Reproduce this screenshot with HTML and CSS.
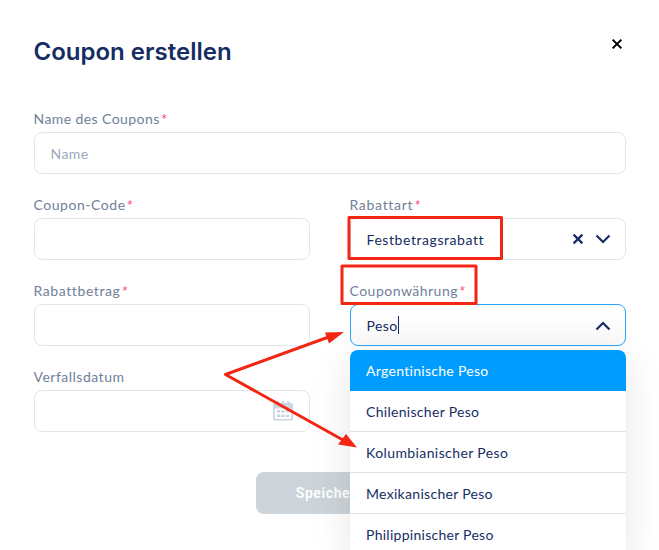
FILE: index.html
```html
<!DOCTYPE html>
<html lang="de">
<head>
<meta charset="utf-8">
<title>Coupon erstellen</title>
<link rel="stylesheet" href="styles.css">
</head>
<body>
<main class="dialog">
  <header class="header">
    <h1 class="title">Coupon erstellen</h1>
    <svg class="close" viewBox="0 0 12 12"><path d="M1.6 1.6 10.4 10.4M10.4 1.6 1.6 10.4"/></svg>
  </header>
  <form class="form">
    <div class="field wide">
      <label class="label"><span class="l-name">Name des Coupons</span><i>*</i></label>
      <div class="input"><span class="placeholder">Name</span></div>
    </div>
    <div class="field">
      <label class="label"><span class="l-code">Coupon-Code</span><i>*</i></label>
      <div class="input"></div>
    </div>
    <div class="field">
      <label class="label"><span class="l-type">Rabattart</span><i>*</i></label>
      <div class="input"><span class="value">Festbetragsrabatt</span>
        <svg class="clear" viewBox="0 0 12 12"><path d="M1.6 1.6 10.4 10.4M10.4 1.6 1.6 10.4"/></svg>
        <svg class="chevron" viewBox="0 0 16 10"><path d="M1.5 1.5 8 8 14.5 1.5"/></svg>
      </div>
    </div>
    <div class="field">
      <label class="label"><span class="l-amount">Rabattbetrag</span><i>*</i></label>
      <div class="input"></div>
    </div>
    <div class="field select">
      <label class="label"><span class="l-currency">Couponwährung</span><i>*</i></label>
      <div class="input focus"><span class="typed">Peso</span><span class="caret"></span>
        <svg class="chevron" viewBox="0 0 16 10"><path d="M1.5 8.5 8 2 14.5 8.5"/></svg>
      </div>
      <div class="menu">
        <div class="option active"><span class="o-ar">Argentinische Peso</span></div>
        <div class="option"><span class="o-cl">Chilenischer Peso</span></div>
        <div class="option"><span class="o-co">Kolumbianischer Peso</span></div>
        <div class="option"><span class="o-mx">Mexikanischer Peso</span></div>
        <div class="option"><span class="o-ph">Philippinischer Peso</span></div>
      </div>
    </div>
    <div class="field">
      <label class="label"><span class="l-date">Verfallsdatum</span></label>
      <div class="input">
        <svg class="calendar" viewBox="0 0 20 20"><path fill-rule="evenodd" d="M2 2H3.600V1Q3.600 0 4.800 0T6 1V2H8.800V1Q8.800 0 10 0T11.200 1V2H14V1Q14 0 15.200 0T16.400 1V2H18Q20 2 20 4V17.500Q20 19.500 18 19.500H2Q0 19.500 0 17.500V4Q0 2 2 2ZM1.700 7.500V17Q1.700 18 2.700 18H17.300Q18.300 18 18.300 17V7.500Z"/><path d="M3.800 9h3.400v2.500H3.800zM8.300 9h3.400v2.500H8.300zM12.800 9h3.400v2.500h-3.400zM3.800 13.500h3.400v2.500H3.800zM8.300 13.500h3.400v2.500H8.300zM12.800 13.500h3.400v2.500h-3.400z"/></svg>
      </div>
    </div>
  </form>
  <button class="submit">Speichern</button>
</main>
<svg class="annotations" viewBox="0 0 659 550">
  <rect x="349" y="217.500" width="152.500" height="41"/>
  <rect x="342" y="266" width="134" height="37.500"/>
  <path d="M330 336.500 225.500 374.500 343 440"/>
  <path class="tip" d="M344 332 325 332.500 329 343.500ZM357 447.500 346 434 338 444.500Z"/>
</svg>
</body>
</html>
```

FILE: styles.css
```css
* { box-sizing: border-box; }
body { margin: 0; width: 659px; height: 550px; overflow: hidden; background: #fff; font: 14px/20px Lato, sans-serif; color: #162d63; position: relative; }
.dialog { padding: 34px 33px 0 34px; }
.header { display: flex; justify-content: space-between; height: 72px; }
.title { margin: 1px 0 0 -.5px; font: 600 24px/34px Inter, sans-serif; }
.close { width: 12px; height: 12px; margin: 4px 3.5px 0 0; fill: none; stroke: #000; stroke-width: 2; }
.form { display: grid; grid-template-columns: 276px 276px; column-gap: 40px; row-gap: 18px; }
.wide { grid-column: 1 / 3; }
.select { position: relative; }
.label { display: flex; height: 26px; line-height: 26px; color: #71809a; }
.label span { margin-left: -.5px; }
.label i { color: #ff4773; margin-left: 1px; font-size: 15px; line-height: 27px; }
.l-name { letter-spacing: .42px; }
.l-code { letter-spacing: .54px; }
.l-type { letter-spacing: .7px; }
.l-amount { letter-spacing: .6px; }
.l-currency { letter-spacing: .48px; }
.l-date { letter-spacing: .5px; }
.input { height: 42px; border: 1px solid #e1e6eb; border-radius: 8px; display: flex; align-items: center; padding: 2px 15px 0 15.5px; }
.placeholder { color: #9ba9bc; letter-spacing: .4px; }
.value { letter-spacing: .57px; }
.typed { letter-spacing: .4px; }
.clear { width: 12px; height: 12px; margin: -3px 10.5px 0 auto; fill: none; stroke: #162d63; stroke-width: 2.2; }
.chevron { width: 16px; height: 10px; fill: none; stroke: #162d63; stroke-width: 2.2; margin: -2px -.5px 0 0; }
.focus { border-color: #26a6fc; background: linear-gradient(#fff, #fafafa); }
.focus .chevron { margin-left: auto; margin-top: -1px; }
.caret { width: 1px; height: 18px; background: #162d63; margin-top: -3px; }
.menu { position: absolute; top: 72px; left: 0; width: 276px; height: 210px; border-radius: 8px; background: #fff; box-shadow: 0 8px 40px rgba(0,0,0,.1); z-index: 2; }
.option { height: 41px; border-bottom: 1px solid #dee1e6; padding: 2px 16px 0; line-height: 38px; white-space: nowrap; }
.active { background: #009dff; color: #fff; border-color: #009dff; border-radius: 8px 8px 0 0; }
.o-ar, .o-cl, .o-mx { letter-spacing: .3px; }
.o-co { letter-spacing: .4px; }
.o-ph { letter-spacing: .27px; }
.calendar { width: 20px; height: 20px; fill: #cbd5e2; margin: -2px 0 0 auto; position: relative; left: -1px; }
.submit { display: block; margin: 40px 0 0 222px; width: 148px; height: 42px; border: 0; border-radius: 8px; background: #ccd4da; color: #fff; padding: 0; font: 600 14px Roboto, sans-serif; letter-spacing: .6px; }
.annotations { position: absolute; inset: 0; width: 659px; height: 550px; fill: none; stroke: #f22613; stroke-width: 3; stroke-linejoin: round; z-index: 3; pointer-events: none; }
.annotations .tip { fill: #f22613; stroke: none; }
```
